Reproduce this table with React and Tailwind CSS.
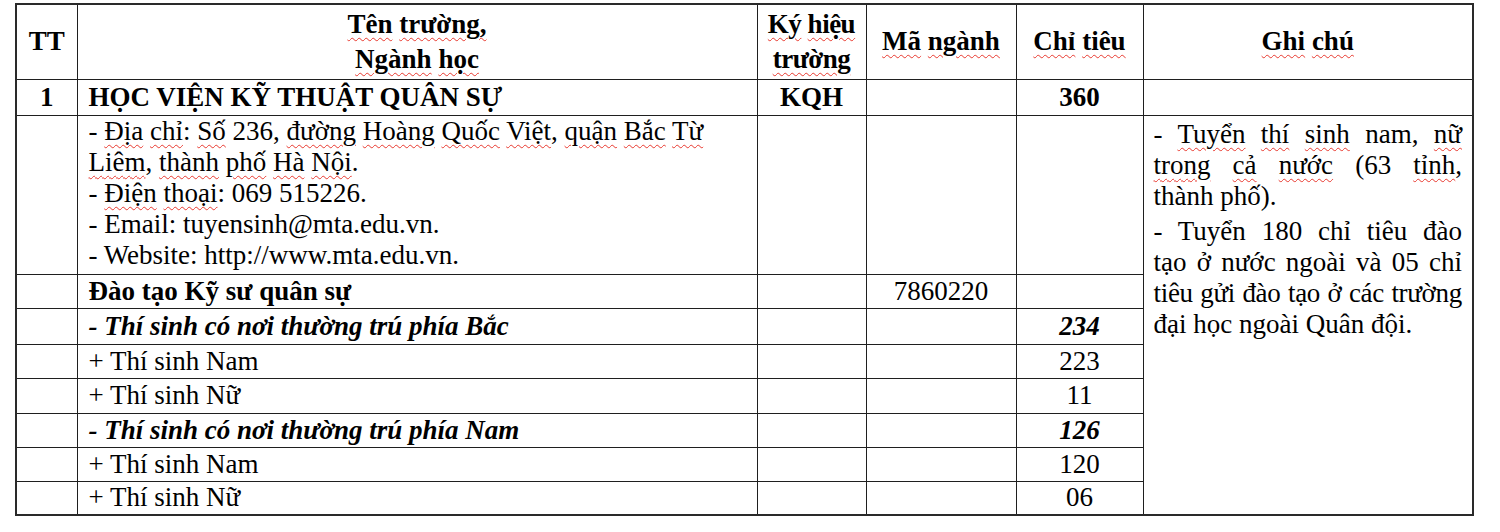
const serif = { fontFamily: '"Liberation Serif", "Times New Roman", serif' };

function W({ children }) {
  return (
    <span className="underline decoration-wavy decoration-[#e8392f] decoration-1 underline-offset-[4px]">
      {children}
    </span>
  );
}

const td = "border border-[#1f1f1f] px-[11px] align-middle";
const num = "border border-[#1f1f1f] text-center align-middle";

const rows = [
  { label: "- Thí sinh có nơi thường trú phía Bắc", value: "234", strong: true, h: "h-[36px]" },
  { label: "+ Thí sinh Nam", value: "223", h: "h-[34px]" },
  { label: "+ Thí sinh Nữ", value: "11", h: "h-[35px]" },
  { label: "- Thí sinh có nơi thường trú phía Nam", value: "126", strong: true, h: "h-[34px]" },
  { label: "+ Thí sinh Nam", value: "120", h: "h-[34px]" },
  { label: "+ Thí sinh Nữ", value: "06", h: "h-[34px]" },
];

export default function App() {
  return (
    <div className="min-h-[532px] w-[1500px] bg-white pt-[3px] pl-[15px] text-black" style={serif}>
      <table className="w-[1457px] table-fixed border-collapse border-2 border-[#2a2a2a] text-[27px] leading-[31px]">
        <colgroup>
          <col className="w-[61px]" />
          <col className="w-[680px]" />
          <col className="w-[109px]" />
          <col className="w-[150px]" />
          <col className="w-[127px]" />
          <col className="w-[330px]" />
        </colgroup>
        <thead>
          <tr className="h-[75px] font-bold">
            <th className={num}>TT</th>
            <th className={`${num} leading-[35px]`}>
              <W>Tên</W> <W>trường,</W>
              <br />
              <W>Ngành</W> <W>học</W>
            </th>
            <th className={`${num} leading-[35px] tracking-[-0.5px]`}>
              <W>Ký</W> <W>hiệu</W>
              <br />
              <W>trường</W>
            </th>
            <th className={num}>
              <W>Mã</W> <W>ngành</W>
            </th>
            <th className={num}>
              <W>Chỉ</W> <W>tiêu</W>
            </th>
            <th className={num}>
              <W>Ghi</W> <W>chú</W>
            </th>
          </tr>
        </thead>
        <tbody>
          <tr className="h-[36px] font-bold">
            <td className={num}>1</td>
            <td className={td}>HỌC VIỆN KỸ THUẬT QUÂN SỰ</td>
            <td className={num}>KQH</td>
            <td className={num}></td>
            <td className={num}>360</td>
            <td className={num}></td>
          </tr>
          <tr className="h-[159px]">
            <td className={num}></td>
            <td className={`${td} pb-[2px]`}>
              <div className="whitespace-nowrap">
                - <W>Địa</W> <W>chỉ</W>: <W>Số</W> 236, <W>đường</W> <W>Hoàng</W> <W>Quốc</W> <W>Việt</W>,{" "}
                <W>quận</W> <W>Bắc</W> <W>Từ</W>
              </div>
              <div className="whitespace-nowrap">
                <W>Liêm</W>, <W>thành</W> <W>phố</W> <W>Hà</W> <W>Nội</W>.
              </div>
              <div>
                - <W>Điện</W> <W>thoại</W>: 069 515226.
              </div>
              <div>- Email: tuyensinh@mta.edu.vn.</div>
              <div>- Website: http://www.mta.edu.vn.</div>
            </td>
            <td className={num}></td>
            <td className={num}></td>
            <td className={num}></td>
            <td rowSpan={8} className="border border-[#1f1f1f] px-[10px] pt-[3px] align-top">
              <div className="[text-align-last:justify] whitespace-nowrap">
                - <W>Tuyển</W> <W>thí</W> <W>sinh</W> nam, <W>nữ</W>
              </div>
              <div className="[text-align-last:justify] whitespace-nowrap">
                <W>trong</W> <W>cả</W> <W>nước</W> (63 <W>tỉnh</W>,
              </div>
              <div>thành phố).</div>
              <div className="mt-[4px] [text-align-last:justify] whitespace-nowrap">
                - Tuyển 180 chỉ tiêu đào
              </div>
              <div className="[text-align-last:justify] whitespace-nowrap">tạo ở nước ngoài và 05 chỉ</div>
              <div className="[text-align-last:justify] whitespace-nowrap tracking-[-0.3px]">tiêu gửi đào tạo ở các trường</div>
              <div>đại học ngoài Quân đội.</div>
            </td>
          </tr>
          <tr className="h-[34px]">
            <td className={num}></td>
            <td className={`${td} font-bold`}>Đào tạo Kỹ sư quân sự</td>
            <td className={num}></td>
            <td className={num}>7860220</td>
            <td className={num}></td>
          </tr>
          {rows.map((r, i) => (
            <tr key={i} className={r.h}>
              <td className={num}></td>
              <td className={`${td} ${r.strong ? "font-bold italic" : ""}`}>{r.label}</td>
              <td className={num}></td>
              <td className={num}></td>
              <td className={`${num} ${r.strong ? "font-bold italic" : ""}`}>{r.value}</td>
            </tr>
          ))}
        </tbody>
      </table>
    </div>
  );
}
